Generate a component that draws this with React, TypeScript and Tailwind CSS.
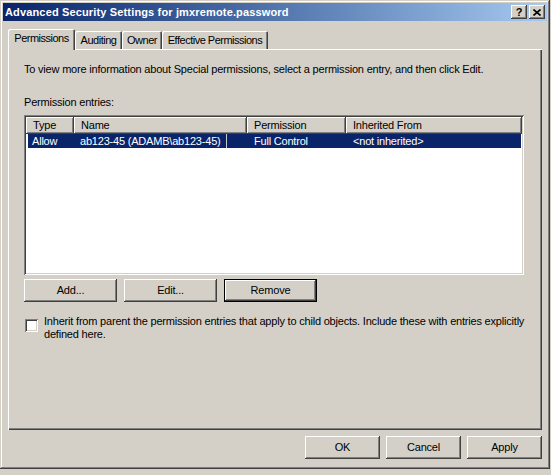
import React from 'react';

// classic 3D edges
const raised =
  'shadow-[inset_-1px_-1px_0_#404040,inset_1px_1px_0_#ffffff,inset_-2px_-2px_0_#808080,inset_2px_2px_0_#d4d0c8]';
const raisedDefault =
  'shadow-[inset_0_0_0_1px_#000000,inset_-2px_-2px_0_#404040,inset_2px_2px_0_#ffffff,inset_-3px_-3px_0_#808080]';
const sunken =
  'shadow-[inset_1px_1px_0_#808080,inset_-1px_-1px_0_#ffffff,inset_2px_2px_0_#404040,inset_-2px_-2px_0_#d4d0c8]';

const Button: React.FC<{ label: string; className?: string; isDefault?: boolean }> = ({
  label,
  className = '',
  isDefault = false,
}) => (
  <div
    className={`h-[23px] flex items-center justify-center bg-[#d4d0c8] ${isDefault ? raisedDefault : raised} ${className}`}
  >
    {label}
  </div>
);

const tabs = [
  { label: 'Permissions', w: 'w-[67px]', active: true },
  { label: 'Auditing', w: 'w-[47px]' },
  { label: 'Owner', w: 'w-[40px]' },
  { label: 'Effective Permissions', w: 'w-[106px]' },
];

const columns = [
  { label: 'Type', w: 'w-[48px]' },
  { label: 'Name', w: 'w-[173px]' },
  { label: 'Permission', w: 'w-[99px]' },
  { label: 'Inherited From', w: 'flex-1' },
];

export default function App() {
  return (
    <div className="w-[551px] h-[475px] bg-[#d4d0c8] text-black text-[11px] leading-[13px] tracking-[-0.2px] font-['Liberation_Sans',Arial,sans-serif]">
      <div className="w-[550px] h-[469px] p-[3px] flex flex-col shadow-[inset_-1px_-1px_0_#404040,inset_1px_1px_0_#d4d0c8,inset_-2px_-2px_0_#808080,inset_2px_2px_0_#ffffff]">
        {/* title bar */}
        <div className="h-[18px] flex items-center justify-between pl-[2px] pr-[2px] bg-gradient-to-r from-[#0a246a] to-[#a6caf0]">
          <span className="text-white font-bold text-[11px] tracking-[0.15px]">
            Advanced Security Settings for jmxremote.password
          </span>
          <div className="flex gap-[2px]">
            <div className={`w-[16px] h-[14px] flex items-center justify-center bg-[#d4d0c8] font-bold text-[11px] tracking-[0px] ${raised}`}>
              ?
            </div>
            <div className={`w-[16px] h-[14px] flex items-center justify-center bg-[#d4d0c8] ${raised}`}>
              <svg width="8" height="7" viewBox="0 0 8 7">
                <path d="M0.5 0.5 L7.5 6.5 M7.5 0.5 L0.5 6.5" stroke="#000" strokeWidth="1.6" />
              </svg>
            </div>
          </div>
        </div>

        <div className="flex-1 flex flex-col px-[5px] pt-[8px]">
          {/* tabs */}
          <div className="h-[20px] flex items-end tracking-[-0.5px]">
            {tabs.map((t) =>
              t.active ? (
                <div
                  key={t.label}
                  className={`${t.w} h-[21px] -mb-[1px] relative z-10 bg-[#d4d0c8] rounded-t-[2px] flex items-start justify-center pt-[3px] shadow-[inset_1px_1px_0_#ffffff,inset_-1px_0_0_#404040,inset_-2px_0_0_#808080]`}
                >
                  {t.label}
                </div>
              ) : (
                <div
                  key={t.label}
                  className={`${t.w} h-[18px] bg-[#d4d0c8] rounded-t-[2px] flex items-center justify-center shadow-[inset_1px_1px_0_#ffffff,inset_-1px_0_0_#404040,inset_-2px_0_0_#808080]`}
                >
                  {t.label}
                </div>
              ),
            )}
          </div>

          {/* tab page */}
          <div className="h-[381px] flex flex-col pl-[16px] pt-[14px] shadow-[inset_1px_1px_0_#ffffff,inset_-1px_-1px_0_#404040,inset_-2px_-2px_0_#808080]">
            <p>To view more information about Special permissions, select a permission entry, and then click Edit.</p>
            <p className="mt-[20px]">Permission entries:</p>

            <div className={`mt-[6px] w-[500px] h-[160px] p-[2px] bg-white ${sunken}`}>
              <div className="flex h-[17px]">
                {columns.map((c) => (
                  <div key={c.label} className={`${c.w} h-full flex items-center pl-[7px] bg-[#d4d0c8] ${raised}`}>
                    {c.label}
                  </div>
                ))}
              </div>
              <div className="flex h-[14px] ml-[2px] mr-[1px] bg-[#0a246a] text-white items-center">
                <div className="w-[46px] pl-[4px]">Allow</div>
                <div className="w-[173px] pl-[6px] flex">
                  <span className="pr-[5px] border-r border-[#c8c8c8] leading-[14px]">ab123-45 (ADAMB\ab123-45)</span>
                </div>
                <div className="w-[99px] pl-[7px]">Full Control</div>
                <div className="flex-1 pl-[7px]">&lt;not inherited&gt;</div>
              </div>
            </div>

            <div className="mt-[4px] flex gap-[7px]">
              <Button label="Add..." className="w-[93px]" />
              <Button label="Edit..." className="w-[93px]" />
              <Button label="Remove" className="w-[93px]" isDefault />
            </div>

            <div className="mt-[13px] flex gap-[6px]">
              <div className={`mt-[4px] ml-[1px] w-[13px] h-[13px] shrink-0 bg-white ${sunken}`} />
              <p className="w-[495px] whitespace-nowrap">
                Inherit from parent the permission entries that apply to child objects. Include these with entries explicitly
                <br />
                defined here.
              </p>
            </div>
          </div>

          {/* dialog buttons */}
          <div className="mt-[6px] flex justify-end gap-[6px]">
            <Button label="OK" className="w-[75px]" />
            <Button label="Cancel" className="w-[75px]" />
            <Button label="Apply" className="w-[75px]" />
          </div>
        </div>
      </div>
    </div>
  );
}
